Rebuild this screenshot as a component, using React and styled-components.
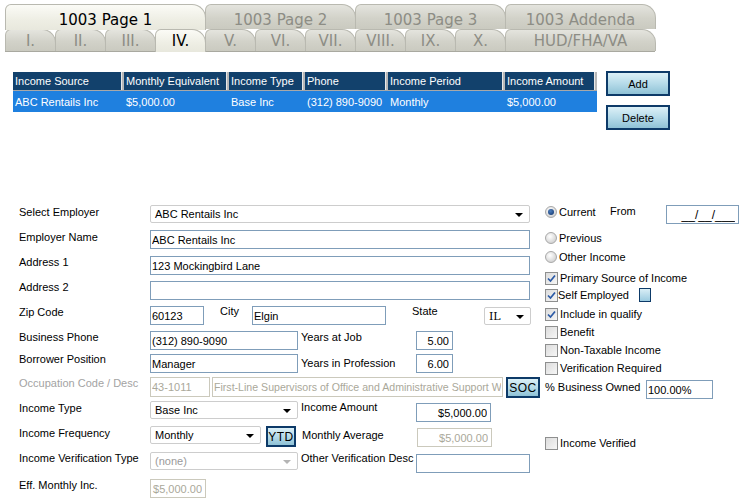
import React from "react";
import styled, { createGlobalStyle, css } from "styled-components";

const GlobalStyle = createGlobalStyle`
  html, body {
    margin: 0;
    padding: 0;
    background: #ffffff;
  }
  body {
    font-family: "Liberation Sans", Arial, sans-serif;
    font-size: 11px;
    color: #000;
  }
`;

const Page = styled.div`
  width: 747px;
  height: 499px;
  overflow: hidden;
  position: relative;
`;

/* ---------- tabs ---------- */

const TabStrip = styled.div`
  margin-left: 5px;
  padding-top: 4px;
  width: 650px;
  font-family: "DejaVu Sans", Verdana, sans-serif;
`;

const TabRow = styled.div`
  display: flex;
  height: ${(p) => p.$h}px;
  border-bottom: ${(p) => (p.$line ? "1px solid #a9a9a0" : "none")};
`;

const Tab = styled.div`
  box-sizing: border-box;
  width: ${(p) => p.$w}px;
  display: flex;
  align-items: center;
  justify-content: center;
  padding-top: ${(p) => p.$pt || 0}px;
  font-size: 15px;
  border: 1px solid #b9b9b0;
  border-bottom: none;
  border-radius: 6px 14px 0 0;
  margin-right: -1px;
  color: ${(p) => (p.$active ? "#000" : "#8d8d85")};
  background: ${(p) =>
    p.$active
      ? "linear-gradient(#fbfbf6, #eeeee4 60%, #e8e8dd)"
      : "linear-gradient(#e4e4de, #d2d2c9 55%, #cacac0)"};
  ${(p) =>
    p.$active &&
    css`
      position: relative;
      z-index: 1;
      margin-bottom: -1px;
    `}
`;

/* ---------- grid ---------- */

const GridArea = styled.div`
  display: flex;
  align-items: flex-start;
  margin-top: 20px;
  padding-left: 13px;
`;

const Grid = styled.div`
  width: 584px;
`;

const GridRow = styled.div`
  display: flex;
  height: ${(p) => (p.$head ? 18 : 21)}px;
  background: ${(p) => (p.$head ? "#12416c" : "#1f80df")};
  color: #fff;
  font-size: 11px;
  ${(p) => p.$head && "border-bottom: 1px solid #a8a8a8;"}
`;

const Cell = styled.div`
  box-sizing: border-box;
  width: ${(p) => p.$w}px;
  padding-left: 2px;
  display: flex;
  align-items: center;
  white-space: nowrap;
  overflow: hidden;
  ${(p) =>
    p.$head &&
    css`
      border-right: 2px solid #b8b8b8;
      box-shadow: inset -1px 0 0 #e8e8e8;
    `}
`;

const ButtonCol = styled.div`
  display: flex;
  flex-direction: column;
  gap: 9px;
  margin-left: 9px;
  margin-top: -1px;
`;

const BlueButton = styled.div`
  box-sizing: border-box;
  width: ${(p) => p.$w}px;
  height: ${(p) => p.$h}px;
  margin-left: ${(p) => p.$ml || 0}px;
  border: 2px solid #0d3a68;
  background: linear-gradient(#dcf0f7, #b6dbe9 50%, #8fc2d6);
  display: flex;
  align-items: center;
  justify-content: center;
  font-family: "Liberation Sans", Arial, sans-serif;
  font-size: ${(p) => p.$fs || 11}px;
  letter-spacing: ${(p) => (p.$fs ? 0.5 : 0)}px;
  color: #000;
  flex-shrink: 0;
`;

/* ---------- form ---------- */

const Form = styled.div`
  display: flex;
  margin-top: 75px;
  padding-left: 19px;
`;

const LeftPanel = styled.div`
  width: 511px;
  display: flex;
  flex-direction: column;
`;

const Row = styled.div`
  display: flex;
  align-items: flex-start;
  height: ${(p) => p.$h}px;
`;

const Label = styled.div`
  width: ${(p) => p.$w}px;
  flex-shrink: 0;
  line-height: 13px;
  margin-top: ${(p) => p.$dy || 0}px;
  margin-left: ${(p) => p.$ml || 0}px;
  color: ${(p) => (p.$dim ? "#a3a3a3" : "#000")};
  white-space: nowrap;
`;

const Input = styled.input`
  box-sizing: border-box;
  width: ${(p) => p.$w}px;
  height: ${(p) => p.$h || 19}px;
  margin: ${(p) => p.$dy || 0}px 0 0 ${(p) => p.$ml || 0}px;
  padding: 0 ${(p) => (p.$align === "right" ? 3 : 1)}px 0 1px;
  border: 1px solid ${(p) => (p.$dim ? "#cbc9bc" : "#7f9db9")};
  background: #fff;
  font-family: "Liberation Sans", Arial, sans-serif;
  font-size: ${(p) => p.$fs || 11}px;
  color: ${(p) => (p.$dim ? "#aaa89a" : "#000")};
  text-align: ${(p) => p.$align || "left"};
  outline: none;
  flex-shrink: 0;
`;

const Select = styled.div`
  box-sizing: border-box;
  width: ${(p) => p.$w}px;
  height: 18px;
  margin-top: ${(p) => p.$dy || 0}px;
  border: 1px solid #cdcdcd;
  border-radius: 2px;
  background: #fff;
  display: flex;
  align-items: center;
  justify-content: space-between;
  padding: 0 6px 0 4px;
  color: ${(p) => (p.$dim ? "#9a9a9a" : "#000")};
  font-family: ${(p) => (p.$serif ? '"DejaVu Serif", serif' : "inherit")};
  flex-shrink: 0;
`;

const Arrow = styled.span`
  width: 0;
  height: 0;
  border-left: 4px solid transparent;
  border-right: 4px solid transparent;
  border-top: 4px solid ${(p) => (p.$dim ? "#b4b4b4" : "#000")};
  margin-top: 2px;
`;

/* ---------- right panel ---------- */

const RightPanel = styled.div`
  margin-left: 15px;
  display: flex;
  flex-direction: column;
`;

const Option = styled.div`
  display: flex;
  align-items: center;
  height: 14px;
  width: ${(p) => (p.$w ? `${p.$w}px` : "auto")};
  margin-top: ${(p) => p.$mt || 0}px;
  gap: ${(p) => (p.$tight ? 0 : 2)}px;
  white-space: nowrap;
`;

const InlineRow = styled.div`
  display: flex;
  align-items: flex-start;
  height: 19px;
  margin-top: ${(p) => p.$mt || 0}px;
`;

const Radio = styled.span`
  box-sizing: border-box;
  width: 12px;
  height: 12px;
  border-radius: 50%;
  border: 1px solid #a8a8a8;
  background: radial-gradient(circle at 40% 35%, #ffffff, #d6d6d6 70%, #c4c4c4);
  display: inline-flex;
  align-items: center;
  justify-content: center;
  flex-shrink: 0;
  &::after {
    content: "";
    width: 6px;
    height: 6px;
    border-radius: 50%;
    background: ${(p) =>
      p.$on ? "radial-gradient(circle at 40% 35%, #4c7fbf, #0f2f66)" : "transparent"};
  }
`;

const Box = styled.span`
  box-sizing: border-box;
  width: 13px;
  height: 13px;
  border: 1px solid #8e8f8f;
  background: linear-gradient(135deg, #dcdcdc, #f6f6f6);
  display: inline-flex;
  align-items: center;
  justify-content: center;
  flex-shrink: 0;
`;

const MiniButton = styled.span`
  box-sizing: border-box;
  width: 12px;
  height: 14px;
  margin-left: 10px;
  border: 1px solid #0d3a68;
  background: linear-gradient(#d9eef6, #9ccbe0);
`;

function Check({ on }) {
  return (
    <Box>
      {on && (
        <svg width="9" height="9" viewBox="0 0 9 9">
          <path d="M1 4.5 L3.5 7 L8 1.5" fill="none" stroke="#2b5aa6" strokeWidth="1.7" />
        </svg>
      )}
    </Box>
  );
}

const topTabs = [
  { t: "1003 Page 1", w: 201, active: true },
  { t: "1003 Page 2", w: 151 },
  { t: "1003 Page 3", w: 151 },
  { t: "1003 Addenda", w: 151 },
];

const subTabs = ["I.", "II.", "III.", "IV.", "V.", "VI.", "VII.", "VIII.", "IX.", "X."];

const cols = [
  ["Income Source", "ABC Rentails Inc", 111],
  ["Monthly Equivalent", "$5,000.00", 105],
  ["Income Type", "Base Inc", 76],
  ["Phone", "(312) 890-9090", 83],
  ["Income Period", "Monthly", 117],
  ["Income Amount", "$5,000.00", 92],
];

export default function App() {
  return (
    <Page>
      <GlobalStyle />
      <TabStrip>
        <TabRow $h={25}>
          {topTabs.map((t) => (
            <Tab key={t.t} $w={t.w} $active={t.active} $pt={5}>
              {t.t}
            </Tab>
          ))}
        </TabRow>
        <TabRow $h={22} $line>
          {subTabs.map((t) => (
            <Tab key={t} $w={51} $active={t === "IV."}>
              {t}
            </Tab>
          ))}
          <Tab $w={151}>HUD/FHA/VA</Tab>
        </TabRow>
      </TabStrip>

      <GridArea>
        <Grid>
          <GridRow $head>
            {cols.map(([h, , w]) => (
              <Cell key={h} $w={w} $head>
                {h}
              </Cell>
            ))}
          </GridRow>
          <GridRow>
            {cols.map(([h, v, w]) => (
              <Cell key={h} $w={w}>
                {v}
              </Cell>
            ))}
          </GridRow>
        </Grid>
        <ButtonCol>
          <BlueButton $w={64} $h={25}>Add</BlueButton>
          <BlueButton $w={64} $h={25}>Delete</BlueButton>
        </ButtonCol>
      </GridArea>

      <Form>
        <LeftPanel>
          <Row $h={25}>
            <Label $w={131} $dy={1}>Select Employer</Label>
            <Select $w={380}>
              ABC Rentails Inc
              <Arrow />
            </Select>
          </Row>
          <Row $h={26}>
            <Label $w={131} $dy={1}>Employer Name</Label>
            <Input $w={380} readOnly value="ABC Rentails Inc" />
          </Row>
          <Row $h={25}>
            <Label $w={131}>Address 1</Label>
            <Input $w={380} readOnly value="123 Mockingbird Lane" />
          </Row>
          <Row $h={25}>
            <Label $w={131}>Address 2</Label>
            <Input $w={380} readOnly value="" />
          </Row>
          <Row $h={25}>
            <Label $w={131}>Zip Code</Label>
            <Input $w={54} readOnly value="60123" />
            <Label $w={32} $ml={16} $dy={-1}>City</Label>
            <Input $w={134} readOnly value="Elgin" />
            <Label $w={72} $ml={26} $dy={-1}>State</Label>
            <Select $w={47} $dy={1} $serif>
              IL
              <Arrow />
            </Select>
          </Row>
          <Row $h={23}>
            <Label $w={131}>Business Phone</Label>
            <Input $w={148} readOnly value="(312) 890-9090" />
            <Label $w={115} $ml={3}>Years at Job</Label>
            <Input $w={37} $align="right" readOnly value="5.00" />
          </Row>
          <Row $h={23}>
            <Label $w={131} $dy={-1}>Borrower Position</Label>
            <Input $w={148} readOnly value="Manager" />
            <Label $w={115} $ml={3} $dy={3}>Years in Profession</Label>
            <Input $w={37} $align="right" readOnly value="6.00" />
          </Row>
          <Row $h={24}>
            <Label $w={131} $dim>Occupation Code / Desc</Label>
            <Input $w={60} $h={20} $dim readOnly value="43-1011" />
            <Input
              $w={291}
              $h={20}
              $ml={2}
              $fs={10.6}
              $dim
              readOnly
              value="First-Line Supervisors of Office and Administrative Support Workers"
            />
            <BlueButton $w={34} $h={21} $fs={12} $ml={3}>
              SOC
            </BlueButton>
          </Row>
          <Row $h={25}>
            <Label $w={131} $dy={1}>Income Type</Label>
            <Select $w={148}>
              Base Inc
              <Arrow />
            </Select>
            <Label $w={115} $ml={3}>Income Amount</Label>
            <Input $w={75} $dy={2} $align="right" readOnly value="$5,000.00" />
          </Row>
          <Row $h={26}>
            <Label $w={131} $dy={1}>Income Frequency</Label>
            <Select $w={111}>
              Monthly
              <Arrow />
            </Select>
            <BlueButton $w={30} $h={21} $fs={12} $ml={5}>
              YTD
            </BlueButton>
            <Label $w={115} $ml={6} $dy={3}>Monthly Average</Label>
            <Input $w={75} $dy={2} $dim $align="right" readOnly value="$5,000.00" />
          </Row>
          <Row $h={27}>
            <Label $w={131}>Income Verification Type</Label>
            <Select $w={148} $dim>
              (none)
              <Arrow $dim />
            </Select>
            <Label $w={115} $ml={3}>Other Verification Desc</Label>
            <Input $w={114} $dy={2} readOnly value="" />
          </Row>
          <Row $h={21}>
            <Label $w={131}>Eff. Monthly Inc.</Label>
            <Input $w={56} $dim $align="right" readOnly value="$5,000.00" />
          </Row>
        </LeftPanel>

        <RightPanel>
          <InlineRow>
            <Option $w={52}>
              <Radio $on />
              Current
            </Option>
            <Label $w={56} $ml={13}>From</Label>
            <Input $w={73} $align="right" $fs={12} readOnly value="__/__/___" />
          </InlineRow>
          <Option $mt={7}>
            <Radio />
            Previous
          </Option>
          <Option $mt={5}>
            <Radio />
            Other Income
          </Option>
          <Option $mt={7}>
            <Check on />
            Primary Source of Income
          </Option>
          <Option $mt={3} $tight>
            <Check on />
            Self Employed
            <MiniButton />
          </Option>
          <Option $mt={5}>
            <Check on />
            Include in qualify
          </Option>
          <Option $mt={4}>
            <Check />
            Benefit
          </Option>
          <Option $mt={4}>
            <Check />
            Non-Taxable Income
          </Option>
          <Option $mt={4}>
            <Check />
            Verification Required
          </Option>
          <InlineRow $mt={6}>
            <Label $w={101}>% Business Owned</Label>
            <Input $w={67} $dy={-1} readOnly value="100.00%" />
          </InlineRow>
          <Option $mt={36}>
            <Check />
            Income Verified
          </Option>
        </RightPanel>
      </Form>
    </Page>
  );
}
